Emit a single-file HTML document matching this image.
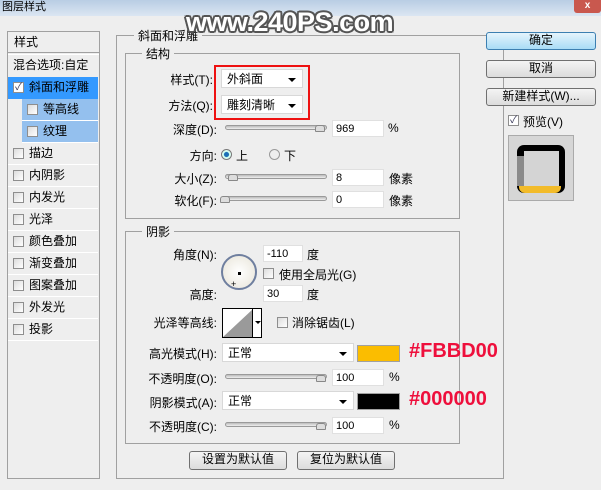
<!DOCTYPE html>
<html><head><meta charset="utf-8"><style>
*{margin:0;padding:0;box-sizing:border-box}
body{width:601px;height:490px;background:#eeeeee;font-family:"Liberation Sans","Noto Sans CJK SC","WenQuanYi Zen Hei",sans-serif;font-size:12px;color:#000;position:relative;overflow:hidden}
.a{position:absolute;white-space:nowrap}
.title{left:0;top:0;width:601px;height:16px;background:linear-gradient(#b9cde4,#dbe6f2)}
.box{position:absolute;border:1px solid #a0a0a0}
.lbl{position:absolute;background:#eeeeee;padding:0 4px;font-size:12px}
.field{position:absolute;background:#fff;border:1px solid #e0e0e0;height:17px;font-size:11px;padding-left:3px;line-height:16px}
.cb{position:absolute;width:11px;height:11px;border:1px solid #8e8e8e;background:linear-gradient(135deg,#dcdcdc,#fff)}
.item{position:absolute;left:8px;width:90px;height:22px;border-bottom:1px solid #fff;line-height:21px}
.item .cb{left:5px;top:5px}
.item span{position:absolute;left:21px}
.btn{position:absolute;border:1px solid #707070;border-radius:3px;background:linear-gradient(#f4f4f4,#dcdcdc);text-align:center;font-size:12px;line-height:15px}
.slider{position:absolute;height:5px;border:1px solid #9a9a9a;border-radius:3px;background:linear-gradient(#bbb,#eee)}
.thumb{position:absolute;width:10px;height:7px;background:#ddd;border:1px solid #888;border-radius:3px 3px 1px 1px}
.dd{position:absolute;background:#fff;border:1px solid #d8d8d8;height:19px;line-height:18px;padding-left:5px}
.dd:after{content:"";position:absolute;right:6px;top:8px;border-left:4px solid transparent;border-right:4px solid transparent;border-top:4px solid #000}
</style></head><body>
<div class="a title"></div>
<div class="a" style="left:2px;top:0;font-size:11px;line-height:14px">图层样式</div>
<div class="a" style="left:574px;top:0;width:27px;height:13px;background:#c9584e;border-radius:0 0 3px 3px;color:#fff;font-size:10px;text-align:center;font-weight:bold">x</div>

<div class="box" style="left:7px;top:31px;width:93px;height:448px;background:#eeeeee"></div>
<div class="a" style="left:14px;top:33px;font-size:12px">样式</div>
<div class="a" style="left:8px;top:52px;width:91px;height:3px;border-top:1px solid #a0a0a0;border-bottom:1px solid #fff"></div>
<div class="a" style="left:13px;top:56px">混合选项:自定</div>
<div class="item" style="top:77px;background:#3399ff;border-bottom:1px solid #3399ff"><div class="cb" style="background:#fff;font-size:10px;line-height:9px;color:#335;text-align:center">✓</div><span style="color:#000">斜面和浮雕</span></div>
<div class="item" style="top:99px;left:22px;width:76px;background:#94c0ee"><div class="cb"></div><span>等高线</span></div>
<div class="item" style="top:121px;left:22px;width:76px;background:#94c0ee"><div class="cb"></div><span>纹理</span></div>
<div class="item" style="top:143px"><div class="cb"></div><span>描边</span></div>
<div class="item" style="top:165px"><div class="cb"></div><span>内阴影</span></div>
<div class="item" style="top:187px"><div class="cb"></div><span>内发光</span></div>
<div class="item" style="top:209px"><div class="cb"></div><span>光泽</span></div>
<div class="item" style="top:231px"><div class="cb"></div><span>颜色叠加</span></div>
<div class="item" style="top:253px"><div class="cb"></div><span>渐变叠加</span></div>
<div class="item" style="top:275px"><div class="cb"></div><span>图案叠加</span></div>
<div class="item" style="top:297px"><div class="cb"></div><span>外发光</span></div>
<div class="item" style="top:319px"><div class="cb"></div><span>投影</span></div>

<div class="box" style="left:116px;top:35px;width:388px;height:444px"></div>
<div class="lbl" style="left:134px;top:27px">斜面和浮雕</div>
<div class="box" style="left:125px;top:53px;width:335px;height:166px"></div>
<div class="lbl" style="left:142px;top:45px">结构</div>

<div class="a" style="left:125px;top:71px;width:88px;text-align:right">样式(T):</div>
<div class="a" style="left:125px;top:97px;width:88px;text-align:right">方法(Q):</div>
<div class="a" style="left:214px;top:65px;width:96px;height:55px;border:2px solid #ee1111"></div>
<div class="dd" style="left:221px;top:69px;width:82px">外斜面</div>
<div class="dd" style="left:221px;top:95px;width:82px">雕刻清晰</div>

<div class="a" style="left:125px;top:121px;width:92px;text-align:right">深度(D):</div>
<div class="slider" style="left:225px;top:125px;width:102px"></div><div class="thumb" style="left:315px;top:125px"></div>
<div class="field" style="left:332px;top:120px;width:52px">969</div><div class="a" style="left:388px;top:121px">%</div>

<div class="a" style="left:125px;top:147px;width:92px;text-align:right">方向:</div>
<div class="a" style="left:221px;top:149px;width:11px;height:11px;border-radius:50%;border:1px solid #777;background:radial-gradient(#1b6fb6 35%,#cfe 45%,#fff)"></div>
<div class="a" style="left:236px;top:147px">上</div>
<div class="a" style="left:269px;top:149px;width:11px;height:11px;border-radius:50%;border:1px solid #999;background:#eee"></div>
<div class="a" style="left:284px;top:147px">下</div>

<div class="a" style="left:125px;top:170px;width:92px;text-align:right">大小(Z):</div>
<div class="slider" style="left:225px;top:174px;width:102px"></div><div class="thumb" style="left:228px;top:174px"></div>
<div class="field" style="left:332px;top:169px;width:52px">8</div><div class="a" style="left:389px;top:170px">像素</div>
<div class="a" style="left:125px;top:192px;width:92px;text-align:right">软化(F):</div>
<div class="slider" style="left:225px;top:196px;width:102px"></div><div class="thumb" style="left:220px;top:196px"></div>
<div class="field" style="left:332px;top:191px;width:52px">0</div><div class="a" style="left:389px;top:192px">像素</div>

<div class="box" style="left:125px;top:231px;width:335px;height:213px"></div>
<div class="lbl" style="left:142px;top:223px">阴影</div>
<div class="a" style="left:125px;top:246px;width:92px;text-align:right">角度(N):</div>
<div class="a" style="left:221px;top:254px;width:36px;height:36px;border-radius:50%;border:2px solid #6f7f9f;background:radial-gradient(#fff,#e8e4d8)"></div>
<div class="a" style="left:238px;top:272px;width:3px;height:3px;background:#000"></div>
<div class="a" style="left:231px;top:279px;font-size:9px">+</div>
<div class="field" style="left:263px;top:245px;width:40px">-110</div><div class="a" style="left:307px;top:246px">度</div>
<div class="cb" style="left:263px;top:268px"></div><div class="a" style="left:279px;top:266px">使用全局光(G)</div>
<div class="a" style="left:125px;top:286px;width:92px;text-align:right">高度:</div>
<div class="field" style="left:263px;top:285px;width:40px">30</div><div class="a" style="left:307px;top:286px">度</div>

<div class="a" style="left:125px;top:314px;width:92px;text-align:right">光泽等高线:</div>
<div class="a" style="left:222px;top:308px;width:40px;height:30px;border:1px solid #000;background:#fff">
<svg width="30" height="28" style="position:absolute;left:0;top:0"><polygon points="0,28 30,0 30,28" fill="#9a9a9a"/></svg>
<div style="position:absolute;left:29px;top:0;width:1px;height:28px;background:#000"></div>
<div style="position:absolute;left:32px;top:12px;border-left:3px solid transparent;border-right:3px solid transparent;border-top:3px solid #000"></div></div>
<div class="cb" style="left:277px;top:317px"></div><div class="a" style="left:292px;top:314px">消除锯齿(L)</div>

<div class="a" style="left:125px;top:345px;width:92px;text-align:right">高光模式(H):</div>
<div class="dd" style="left:222px;top:343px;width:132px">正常</div>
<div class="a" style="left:357px;top:345px;width:43px;height:17px;background:#fbbd00;border:1px solid #a0a0a0"></div>
<div class="a" style="left:409px;top:340px;color:#ee0f3c;font-weight:bold;font-size:20px">#FBBD00</div>
<div class="a" style="left:125px;top:370px;width:92px;text-align:right">不透明度(O):</div>
<div class="slider" style="left:225px;top:374px;width:102px"></div><div class="thumb" style="left:316px;top:375px"></div>
<div class="field" style="left:332px;top:369px;width:52px">100</div><div class="a" style="left:389px;top:370px">%</div>

<div class="a" style="left:125px;top:394px;width:92px;text-align:right">阴影模式(A):</div>
<div class="dd" style="left:222px;top:391px;width:132px">正常</div>
<div class="a" style="left:357px;top:393px;width:43px;height:17px;background:#000;border:1px solid #a0a0a0"></div>
<div class="a" style="left:409px;top:388px;color:#ee0f3c;font-weight:bold;font-size:20px">#000000</div>
<div class="a" style="left:125px;top:418px;width:92px;text-align:right">不透明度(C):</div>
<div class="slider" style="left:225px;top:422px;width:102px"></div><div class="thumb" style="left:316px;top:423px"></div>
<div class="field" style="left:332px;top:417px;width:52px">100</div><div class="a" style="left:389px;top:418px">%</div>

<div class="btn" style="left:189px;top:451px;width:98px;height:19px">设置为默认值</div>
<div class="btn" style="left:297px;top:451px;width:98px;height:19px">复位为默认值</div>

<div class="btn" style="left:486px;top:32px;width:110px;height:18px;border-color:#3c7fb1;background:linear-gradient(#e5f4fc,#a9dcf6)">确定</div>
<div class="btn" style="left:486px;top:60px;width:110px;height:18px">取消</div>
<div class="btn" style="left:486px;top:88px;width:110px;height:18px">新建样式(W)...</div>
<div class="cb" style="left:508px;top:115px;background:#fff;font-size:10px;line-height:9px;color:#335;text-align:center">✓</div>
<div class="a" style="left:523px;top:113px">预览(V)</div>
<div class="a" style="left:508px;top:135px;width:66px;height:66px;border:1px solid #aaa;background:#d6d6d6">
<div style="position:absolute;left:8px;top:9px;width:48px;height:48px;background:#000;border-radius:7px"></div>
<div style="position:absolute;left:8px;top:20px;width:7px;height:30px;background:#8a8a8a"></div>
<div style="position:absolute;left:15px;top:15px;width:35px;height:35px;background:#d4d4d4"></div>
<div style="position:absolute;left:10px;top:50px;width:42px;height:7px;background:#f2bb2a;border-radius:0 0 6px 6px"></div>
</div>

<div class="a" style="left:186px;top:7px;font-family:'Liberation Sans',sans-serif;font-weight:bold;font-size:27px;color:#fff;letter-spacing:-0.5px;text-shadow:2px 0 #555,-2px 0 #555,0 2px #555,0 -2px #555,1.5px 1.5px #555,-1.5px -1.5px #555,1.5px -1.5px #555,-1.5px 1.5px #555">www.240PS.com</div>
</body></html>
